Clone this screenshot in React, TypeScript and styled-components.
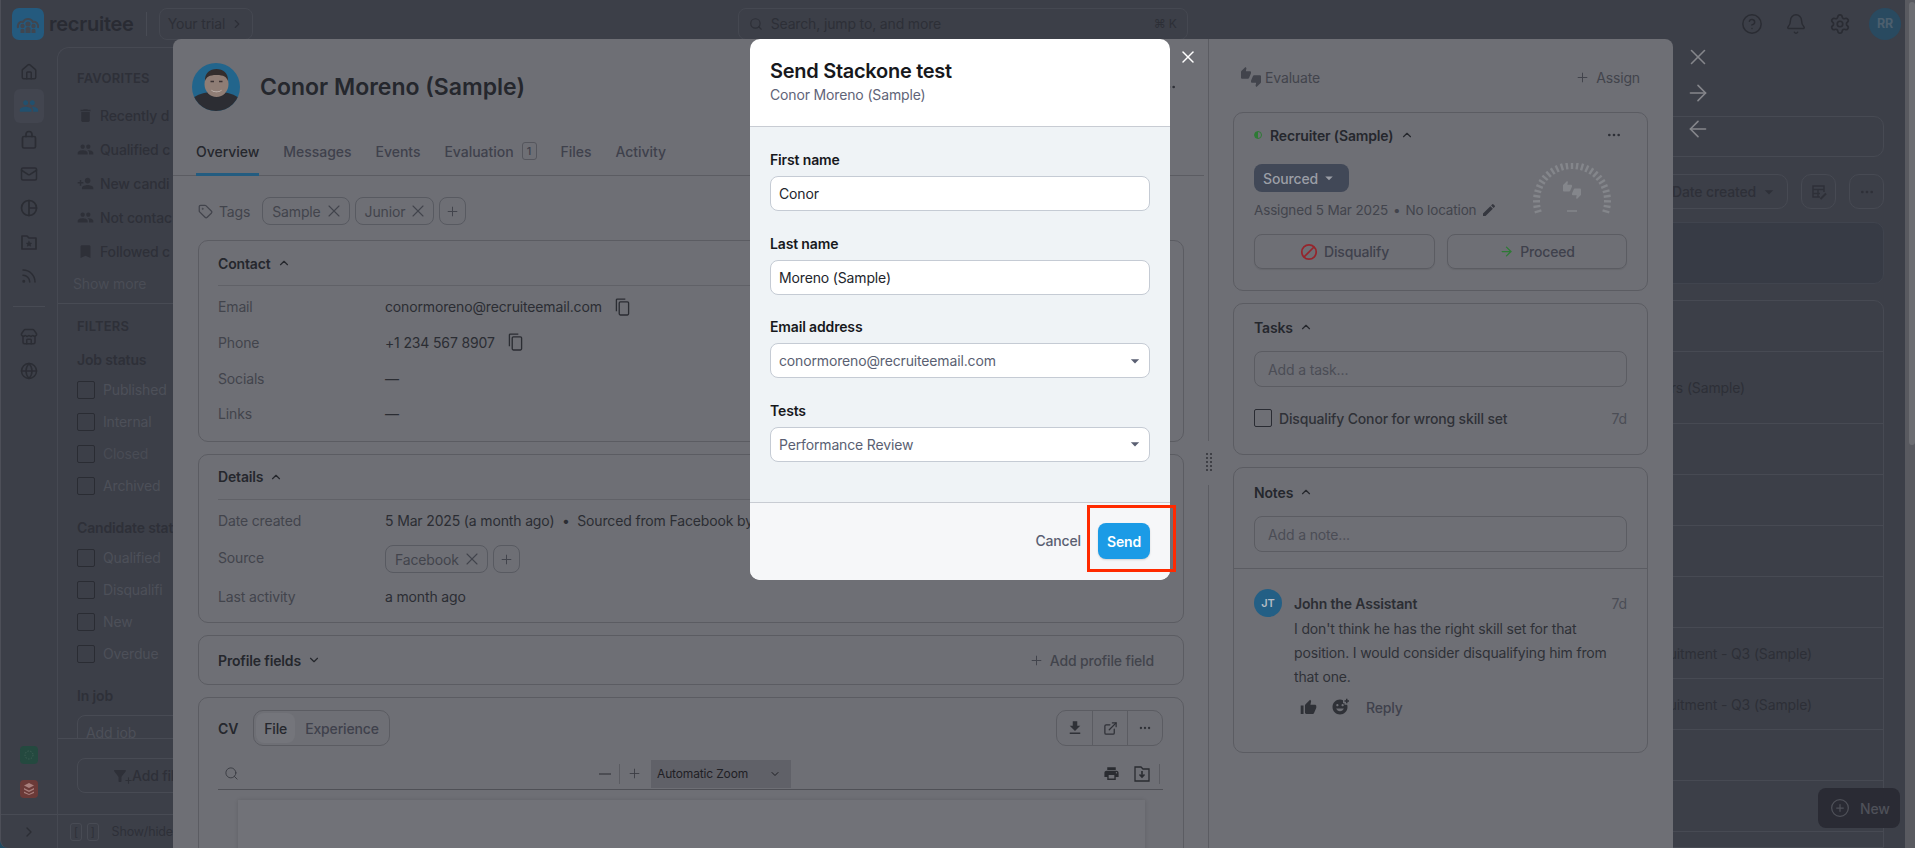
import React from "react";
import styled, { createGlobalStyle } from "styled-components";
import {
  Home, Mail, Rss, Store, Globe, ChevronRight, ChevronUp, ChevronDown,
  Search, CircleHelp, Bell, Settings, X, ArrowRight, ArrowLeft, MoreHorizontal, Tag, Plus,
  ExternalLink, PlusCircle,
} from "lucide-react";
import {
  MdDelete, MdPeople, MdPersonAdd, MdBookmark, MdThumbsUpDown, MdThumbUp, MdAddReaction, MdEdit, MdPrint,
  MdFileDownload, MdFilterAlt, MdArrowDropDown,
} from "react-icons/md";

const GlobalStyle = createGlobalStyle`
  html, body { margin: 0; padding: 0; background: #3c3f48; }
  body { font-family: Inter, "Liberation Sans", sans-serif; font-size: 14px; letter-spacing: -0.15px; }
  * { box-sizing: border-box; }
`;

const Viewport = styled.div`
  position: relative; width: 1915px; height: 848px; overflow: hidden; display: flex; background: #1f4a62;
`;
const Shell = styled.div`
  flex: 1; min-width: 0; display: flex; flex-direction: column; background: #3c3f48; border-left: 1px solid #4d4f58;
  border-bottom-left-radius: 8px;
`;
const ScrollTrack = styled.div`width: 10px; background: #595a60; padding: 2px 0 0 4px;`;
const ScrollThumb = styled.div`width: 6px; height: 443px; border-radius: 3px; background: #6c6d72;`;

/* top bar */
const TopBar = styled.header`
  height: 47px; flex: none; display: flex; align-items: center; padding: 0 4px 0 11px; position: relative;
`;
const Wordmark = styled.span`font-size: 20px; font-weight: 600; color: #292b33; margin-left: 5px; letter-spacing: -0.25px;`;
const BarDivider = styled.div`width: 1px; height: 24px; background: #484b54; margin: 0 12px;`;
const TrialButton = styled.div`
  width: 94px; height: 32px; border: 1px solid #454851; border-radius: 8px; display: flex; align-items: center;
  justify-content: space-between; padding: 0 8px 0 8px; color: #2d2f37; font-size: 14px;
`;
const SearchBox = styled.div`
  width: 450px; height: 32px; margin-left: 485px; border: 1px solid #454851; border-radius: 8px; display: flex;
  align-items: center; padding: 0 10px; color: #2d2f37; font-size: 14px; gap: 8px;
`;
const Kbd = styled.span`margin-left: auto; font-size: 12px; color: #2d2f37;`;
const TopIcons = styled.div`margin-left: auto; display: flex; align-items: center; gap: 22px; color: #2a2c33;`;
const UserBadge = styled.div`
  width: 32px; height: 32px; border-radius: 50%; background: #294a60; color: #4c5f6e; font-weight: 700; font-size: 12.5px;
  display: flex; align-items: center; justify-content: center; margin-left: -4px;
`;

const Body = styled.div`flex: 1; min-height: 0; display: flex;`;

/* rail */
const Rail = styled.nav`width: 56px; flex: none; display: flex; flex-direction: column; align-items: center; padding-top: 8px; color: #2b2d34;`;
const RailItem = styled.div<{ $active?: boolean }>`
  width: 30px; height: 34px; border-radius: 6px; display: flex; align-items: center; justify-content: center;
  background: ${(p) => (p.$active ? "#42454f" : "transparent")}; color: ${(p) => (p.$active ? "#22506e" : "#2b2d34")};
`;
const RailRule = styled.div`width: 32px; height: 1px; background: #484b54; margin: 13px 0 13px;`;
const RailSpacer = styled.div`flex: 1;`;
const StatusTile = styled.div<{ $bg: string }>`
  width: 18px; height: 18px; border-radius: 4px; background: ${(p) => p.$bg}; margin-bottom: 16px;
  display: flex; align-items: center; justify-content: center;
`;
const RailFoot = styled.div`height: 34px; width: 100%; border-top: 1px solid #484b54; display: flex; align-items: center; justify-content: center;`;

/* sidebar */
const Sidebar = styled.aside`
  width: 116px; flex: none; display: flex; flex-direction: column; border-left: 1px solid #464952; border-top: 1px solid #464952;
  border-top-left-radius: 12px; color: #2e3038; overflow: hidden;
`;
const SideScroll = styled.div`height: 690px; overflow: hidden; flex: none;`;
const SidePad = styled.div`padding: 0 0 0 19px; white-space: nowrap;`;
const SideHead = styled.div<{ $top: number }>`
  font-size: 13px; font-weight: 600; line-height: 20px; letter-spacing: 0.2px; margin-top: ${(p) => p.$top}px;
`;
const FavList = styled.div`margin-top: 10px; display: flex; flex-direction: column;`;
const FavItem = styled.div`height: 34px; display: flex; align-items: center; gap: 6px; font-weight: 500; font-size: 14px; white-space: nowrap;`;
const ShowMore = styled.div`color: #4a4d56; line-height: 20px; margin: 5.5px 0 9px -4px; font-size: 14px;`;
const SideRule = styled.div`height: 1px; background: #484b54;`;
const GroupTitle = styled.div<{ $top: number }>`font-weight: 600; line-height: 20px; margin-top: ${(p) => p.$top}px; font-size: 14px; white-space: nowrap;`;
const CheckList = styled.div`margin-top: 4px;`;
const CheckRow = styled.div<{ $faded?: boolean }>`
  height: 32px; display: flex; align-items: center; gap: 8px; color: ${(p) => (p.$faded ? "#494c55" : "#4d5059")}; white-space: nowrap;
`;
const CheckBox = styled.span`width: 18px; height: 18px; border: 1.5px solid #2a2c33; border-radius: 2px; flex: none;`;
const JobInput = styled.div`width: 154px; height: 35px; margin-top: 9px; border: 1px solid #484b54; border-radius: 8px; padding: 8px; color: #4d5059;`;
const SideAction = styled.div`height: 76px; border-top: 1px solid #484b54; padding: 19px 0 0 19px; flex: none;`;
const FilterBtn = styled.div`
  width: 154px; height: 35px; border: 1px solid #484b54; border-radius: 8px; display: flex; align-items: center; padding-left: 33px;
  font-weight: 500; color: #2e3038; white-space: nowrap;
`;
const FunnelPlus = styled(Plus)`margin: 10px -1px 0 -5px; flex: none;`;
const SideFoot = styled.div`height: 34px; border-top: 1px solid #484b54; display: flex; align-items: center; gap: 5px; padding-left: 12px; color: #2e3038; white-space: nowrap;`;
const KeyCap = styled.span`width: 15px; height: 18px; border: 1px solid #484b54; border-radius: 3px; display: flex; align-items: center; justify-content: center; font-size: 11px;`;
const FootText = styled.span`margin-left: 8px; font-size: 12.5px;`;

/* background main */
const Main = styled.main`flex: 1; min-width: 0; padding: 69px 21px 0 0; display: flex; flex-direction: column;`;
const TopBox = styled.div`height: 41px; border: 1px solid #474a53; border-radius: 10px; flex: none;`;
const Controls = styled.div`height: 35px; margin-top: 17px; display: flex; justify-content: flex-end; gap: 13px; flex: none;`;
const SortSelect = styled.div`
  width: 170px; border: 1px solid #474a53; border-radius: 10px; display: flex; align-items: center; justify-content: flex-end; gap: 3px;
  padding-right: 8px; color: #2e3038; font-weight: 500; font-size: 14px;
`;
const SquareBtn = styled.div`width: 35px; border: 1px solid #474a53; border-radius: 10px; display: flex; align-items: center; justify-content: center; color: #2e3038;`;
const InfoBox = styled.div`height: 62px; margin-top: 13px; background: #373b45; border: 1px solid #40444e; border-radius: 10px; flex: none;`;
const Table = styled.div`margin-top: 16px; border: 1px solid #474a53; border-radius: 10px 10px 0 0; flex: 1;`;
const TableRow = styled.div<{ $h: number; $end: number }>`
  height: ${(p) => p.$h}px; border-bottom: 1px solid #474a53; display: flex; align-items: center; justify-content: flex-end;
  padding-right: ${(p) => p.$end}px; color: #2d2f37; font-size: 14px;
`;
const NewFab = styled.div`
  position: absolute; left: 1818px; top: 788px; width: 82px; height: 40px; border-radius: 8px; background: #2a2b34; color: #4f5159;
  display: flex; align-items: center; padding-left: 12px; gap: 10px; font-weight: 500; font-size: 14px;
`;

/* drawer */
const Drawer = styled.section`
  position: absolute; left: 173px; top: 39px; width: 1500px; height: 809px; background: #6e6f75; border-radius: 8px 8px 0 0;
  display: flex; overflow: hidden; color: #25272d;
`;
const DrawerLeft = styled.div`width: 1031px; flex: none; display: flex; flex-direction: column;`;
const Splitter = styled.div`width: 9px; flex: none; display: flex; flex-direction: column; align-items: center;`;
const SplitLine = styled.div<{ $h?: number }>`width: 1px; background: #5b5c62; ${(p) => (p.$h ? `height: ${p.$h}px;` : "flex: 1;")}`;
const SplitDots = styled.div`height: 44px; padding: 12px 0; display: grid; grid-template-columns: 2px 2px; grid-auto-rows: 2px; gap: 2px 2px;`;
const SplitDot = styled.span`background: #3f4046;`;
const DrawerRight = styled.div`flex: 1; padding: 20px 25px 0 20px; display: flex; flex-direction: column;`;

const NameRow = styled.div`height: 48px; margin-top: 24px; padding: 0 27px 0 19px; display: flex; align-items: center; gap: 20px; flex: none;`;
const Name = styled.h1`margin: 0; font-size: 23px; font-weight: 600; color: #25272d; flex: 1; letter-spacing: 0;`;
const TabBar = styled.div`height: 47px; margin-top: 18px; padding-left: 23px; display: flex; gap: 24px; border-bottom: 1px solid #5b5c62; flex: none;`;
const TabItem = styled.div<{ $on?: boolean }>`
  height: 47px; display: flex; align-items: center; gap: 8px; font-weight: 500; font-size: 14px; letter-spacing: -0.03px;
  color: ${(p) => (p.$on ? "#25272d" : "#3f414c")};
  border-bottom: 3px solid ${(p) => (p.$on ? "#235c80" : "transparent")};
`;
const CountBadge = styled.span`width: 15px; height: 18px; border: 1px solid #55565d; border-radius: 3px; display: flex; align-items: center; justify-content: center; font-size: 11px;`;
const TagRow = styled.div`height: 28px; margin-top: 21px; padding-left: 25px; display: flex; align-items: center; gap: 5px; color: #42444c; flex: none;`;
const TagLabel = styled.span`margin: 0 7px 0 1px;`;
const Chip = styled.span`
  height: 28px; border: 1px solid #585a61; border-radius: 8px; padding: 0 8px 0 9px; display: inline-flex; align-items: center; gap: 6px; color: #42444c; font-size: 14px;
`;
const ChipX = styled(X).attrs({ size: 20, strokeWidth: 1.3 })`margin: -3px;`;
const ChipAdd = styled.span`width: 27px; height: 28px; border: 1px solid #585a61; border-radius: 8px; display: inline-flex; align-items: center; justify-content: center; color: #42444c;`;

const Stack = styled.div`margin: 15px 20px 0 25px; display: flex; flex-direction: column; gap: 12px;`;
const Card = styled.div<{ $fill?: boolean }>`
  border: 1px solid #5b5c62; border-radius: 10px; padding: 0 20px 0 19px; flex: none;
  ${(p) => (p.$fill ? "height: 200px;" : "")}
`;
const CardHead = styled.div<{ $h: number; $rule?: boolean }>`
  height: ${(p) => p.$h}px; display: flex; align-items: center; gap: 6px; font-weight: 600; color: #25272d; font-size: 14px;
  ${(p) => (p.$rule ? "border-bottom: 1px solid #606167;" : "")}
`;
const AddField = styled.span`margin-left: auto; margin-right: 9px; font-weight: 500; color: #42444c; display: flex; align-items: center; gap: 6px;`;
const Rows = styled.div<{ $bottom: number }>`padding: 3px 0 ${(p) => p.$bottom}px;`;
const InfoRow = styled.div<{ $h?: number }>`height: ${(p) => p.$h ?? 35.67}px; display: grid; grid-template-columns: 167px 1fr; align-items: center;`;
const InfoKey = styled.span`color: #42444c;`;
const InfoVal = styled.span`color: #2b2d33; display: flex; align-items: center; gap: 13px; white-space: nowrap;`;
const ChipGroup = styled.span`display: flex; gap: 5px; padding-top: 3px;`;

const CvHead = styled.div`height: 36px; margin-top: 12px; display: flex; align-items: center; gap: 15px;`;
const CvTitle = styled.span`font-weight: 600;`;
const Segmented = styled.div`height: 36px; border: 1px solid #5b5c62; border-radius: 10px; display: flex; padding: 2px; align-items: stretch;`;
const SegItem = styled.span<{ $on?: boolean }>`
  display: flex; align-items: center; padding: ${(p) => (p.$on ? "0 8px" : "0 8px 0 10px")}; border-radius: 8px; font-weight: 500; font-size: 14px;
  background: ${(p) => (p.$on ? "#74757b" : "transparent")}; color: ${(p) => (p.$on ? "#25272d" : "#3f414c")};
`;
const BtnGroup = styled.div`margin-left: auto; height: 36px; border: 1px solid #5b5c62; border-radius: 10px; display: flex; color: #2f3137;`;
const BtnCell = styled.span`width: 35px; display: flex; align-items: center; justify-content: center; border-left: 1px solid #5b5c62; &:first-child { border-left: 0; }`;
const PdfBar = styled.div`height: 30px; margin-top: 14px; border-bottom: 1px solid #4f5056; display: flex; align-items: center; padding: 0 3px 2px 6px; color: #3a3c42;`;
const PdfZoom = styled.div`margin-left: 359px; display: flex; align-items: center; gap: 7px; height: 28px;`;
const PdfSep = styled.span`width: 1px; height: 20px; background: #5b5c62;`;
const PdfSelect = styled.div`
  width: 140px; height: 28px; margin-left: 2px; background: #606168; display: flex; align-items: center; justify-content: space-between; padding: 0 10px 0 6px;
  font-size: 12px; color: #1f2025;
`;
const PdfTools = styled.div`margin-left: auto; display: flex; align-items: center; gap: 13px; color: #2a2c31;`;
const PdfToolSep = styled(PdfSep)`margin-left: -5px;`;
const PdfPage = styled.div`height: 80px; margin: 10px 18px 0 20px; background: #717278; box-shadow: 0 0 4px rgba(0,0,0,.12);`;

/* right column */
const EvalBar = styled.div`height: 36px; display: flex; align-items: center; padding: 0 8px; color: #42444c; font-size: 14px; flex: none;`;
const EvalItem = styled.span`display: flex; align-items: center; gap: 4px;`;
const AssignItem = styled(EvalItem)`margin-left: auto; gap: 6px;`;
const SideCard = styled.div<{ $top: number }>`
  margin-top: ${(p) => p.$top}px; border: 1px solid #5b5c62; border-radius: 10px; flex: none;
`;
const SideCardPad = styled.div`padding: 0 20px;`;
const StageHead = styled.div`height: 22px; margin-top: 11px; display: flex; align-items: center; font-weight: 600; color: #25272d; gap: 7px;`;
const HalfDot = styled.span`
  width: 8px; height: 8px; border-radius: 50%; border: 1.5px solid #2e7a35; flex: none; margin-right: 1px;
  background: linear-gradient(90deg, #2e7a35 50%, transparent 50%);
`;
const DotsRight = styled.span`margin-left: auto; margin-right: 5px; display: flex; color: #2e3037;`;
const StageBody = styled.div`margin-top: 18px; display: flex; justify-content: space-between; height: 56px;`;
const StageInfo = styled.div`display: flex; flex-direction: column; align-items: flex-start;`;
const StageBtn = styled.div`
  height: 28px; width: 95px; border-radius: 8px; background: #414857; color: #9b9ea6; font-weight: 500; display: flex; align-items: center;
  padding-left: 9px; gap: 2px;
`;
const StageMeta = styled.div`margin-top: 8px; height: 20px; display: flex; align-items: center; gap: 5px; color: #42444c; white-space: nowrap; font-size: 13.5px;`;
const GaugeWrap = styled.div`width: 84px; height: 56px; margin: -1px 13px 0 0; color: #84868b;`;
const ActionRow = styled.div`display: grid; grid-template-columns: 181px 180px; justify-content: space-between; margin-top: 14px; padding-bottom: 21px;`;
const ActionBtn = styled.div`
  height: 35px; border: 1px solid #5b5c62; border-radius: 8px; display: flex; align-items: center; justify-content: center; gap: 6px;
  font-weight: 500; color: #3f414c; box-shadow: 0 1px 1px rgba(0,0,0,.08);
`;
const SideTitle = styled.div<{ $top: number }>`height: 20px; margin-top: ${(p) => p.$top}px; display: flex; align-items: center; gap: 6px; font-weight: 600; color: #25272d;`;
const Field = styled.div<{ $top: number }>`
  height: 36px; margin-top: ${(p) => p.$top}px; border: 1px solid #5b5c62; border-radius: 8px; display: flex; align-items: center; padding: 0 13px; color: #4b4d55;
`;
const TaskRow = styled.div`height: 22px; margin: 20px 0 25px; display: flex; align-items: center; gap: 7px; color: #2f3137; font-weight: 500;`;
const TaskAge = styled.span`margin-left: auto; color: #4b4d55; font-weight: 400;`;
const TaskBox = styled.span`width: 18px; height: 18px; border: 1.5px solid #2a2c33; border-radius: 2px;`;
const NotesRule = styled.div`height: 1px; background: #5b5c62; margin-top: 16px;`;
const NoteWrap = styled.div`padding: 20px 20px 33px; display: flex; gap: 12px;`;
const NoteAvatar = styled.div`
  width: 28px; height: 28px; border-radius: 50%; background: #235f85; color: #b4bcc4; font-size: 11px; font-weight: 600; flex: none;
  display: flex; align-items: center; justify-content: center;
`;
const NoteMain = styled.div`flex: 1;`;
const NoteHead = styled.div`height: 28px; display: flex; align-items: center; justify-content: space-between; font-weight: 600; color: #2b2d33;`;
const NoteAge = styled.span`color: #4b4d55; font-weight: 400;`;
const NoteText = styled.p`margin: 0; line-height: 24px; color: #2f3137; font-weight: 400;`;
const NoteActions = styled.div`height: 24px; margin-top: 6px; padding-left: 6px; display: flex; align-items: center; gap: 14px; color: #2f3137;`;
const ReplyLink = styled.span`color: #3f414c; font-weight: 500; margin-left: 3px;`;

const DrawerNav = styled.div`
  position: absolute; left: 1685px; top: 44px; display: flex; flex-direction: column; gap: 10px; color: #85868b;
`;

/* modal */
const Modal = styled.div`
  position: absolute; left: 750px; top: 39px; width: 420px; height: 541px; border-radius: 10px; overflow: hidden; background: #fff;
  display: flex; flex-direction: column;
`;
const ModalHead = styled.div`height: 88px; padding: 20px 20px 0; border-bottom: 1px solid #c8ccd3; flex: none;`;
const ModalTitle = styled.h2`margin: 0; font-size: 20px; line-height: 24px; font-weight: 600; color: #17181c; letter-spacing: -0.28px;`;
const ModalSub = styled.div`margin-top: 2px; line-height: 20px; font-size: 14px; color: #5f6478;`;
const ModalBody = styled.div`flex: 1; background: #eff3f6; padding: 23px 20px 0;`;
const FieldBlock = styled.div`margin-bottom: 22.67px;`;
const FieldLabel = styled.label`display: block; font-size: 14px; line-height: 20px; font-weight: 600; color: #17181c; margin-bottom: 6px;`;
const TextBox = styled.div`
  height: 35px; background: #fff; border: 1px solid #c5cbd4; border-radius: 8px; padding: 0 8px; display: flex; align-items: center; font-size: 14px; color: #23252c;
`;
const SelectBox = styled(TextBox)`justify-content: space-between; color: #5a5f72; font-weight: 400; padding-right: 4px;`;
const ModalFoot = styled.div`
  height: 78px; flex: none; background: #f6f7f9; border-top: 1px solid #c8ccd3; display: flex; justify-content: flex-end; align-items: flex-start; gap: 17px; padding: 20px 20px 0;
`;
const CancelBtn = styled.span`line-height: 36px; font-weight: 500; color: #5a5f72; font-size: 14px;`;
const SendBtn = styled.span`
  height: 36px; width: 52px; border-radius: 8px; background: #1b9be6; color: #fff; font-weight: 600; font-size: 14px; display: flex; align-items: center; justify-content: center;
  box-shadow: 0 1px 2px rgba(0,0,0,.15);
`;
const ModalClose = styled.div`position: absolute; left: 1178px; top: 47px; color: #fff; display: flex;`;
const RedFrame = styled.div`position: absolute; left: 1087px; top: 505px; width: 89px; height: 67px; border: 3px solid #ff2a00;`;

const Logo = () => (
  <svg width="32" height="32" viewBox="0 0 32 32">
    <rect width="32" height="32" rx="7" fill="#245a7e" />
    <path d="M6 20c-1-5 3-7 5-6 2-4 8-4 10 0 3-1 6 2 5 6" fill="none" stroke="#3f4650" strokeWidth="2" />
    <circle cx="10.5" cy="18" r="2.2" fill="#3f4650" /><circle cx="16" cy="16" r="2.6" fill="#3f4650" /><circle cx="21.5" cy="18" r="2.2" fill="#3f4650" />
    <path d="M8.5 25v-3c0-1.5 4-1.5 4 0v3zM13.5 25v-4.5c0-2 5-2 5 0V25zM19.5 25v-3c0-1.5 4-1.5 4 0v3z" fill="#3f4650" />
  </svg>
);

const Portrait = () => (
  <svg width="48" height="48" viewBox="0 0 48 48" style={{ flex: "none" }}>
    <defs><clipPath id="pc"><circle cx="24" cy="24" r="24" /></clipPath></defs>
    <g clipPath="url(#pc)">
      <rect width="48" height="48" fill="#22658c" />
      <path d="M0 48V36c5-5 13-6 17-7h14c4 1 12 2 17 7v12z" fill="#2c2d33" />
      <ellipse cx="24.5" cy="21" rx="12" ry="13" fill="#8f7d75" />
      <path d="M13 18c-.5-8 5-12 11.500-12s12 4 11.500 12c-1.500-4-4-6-11.500-6s-10 2-11.500 6z" fill="#332d2d" />
      <path d="M18.500 18.500h3.500M27 18.500h3.500" stroke="#3c3334" strokeWidth="1.300" />
      <path d="M19 26.500c3 2.800 8 2.800 11 0-1 3.500-10 3.500-11 0z" fill="#cfc6c1" />
    </g>
  </svg>
);

const Gauge = () => {
  const ticks = Array.from({ length: 27 }, (_, i) => -197 + (i * 214) / 26);
  return (
    <svg width="84" height="56" viewBox="0 0 84 56">
      {ticks.map((a) => {
        const r = (a * Math.PI) / 180;
        return (
          <line key={a} x1={42 + 32 * Math.cos(r)} y1={38 + 32 * Math.sin(r)} x2={42 + 39 * Math.cos(r)} y2={38 + 39 * Math.sin(r)}
            stroke="currentColor" strokeWidth="2.4" />
        );
      })}
      <line x1="37" y1="48" x2="47" y2="48" stroke="currentColor" strokeWidth="1.3" />
      <g transform="translate(33 18)"><MdThumbsUpDown size={18} /></g>
    </svg>
  );
};

const iconProps = { width: 20, height: 20, viewBox: "0 0 20 20", fill: "none", stroke: "currentColor", strokeWidth: 1.7, strokeLinecap: "round" as const, strokeLinejoin: "round" as const };
const BagIcon = () => (<svg {...iconProps}><rect x="3.5" y="6.5" width="13" height="11.5" rx="1.5" /><path d="M7 6.5V4.5a3 3 0 0 1 6 0v2" /></svg>);
const ChartIcon = () => (<svg {...iconProps}><circle cx="10" cy="10" r="7.5" /><path d="M10 2.5v15M10 10h7.5" /></svg>);
const FolderStar = () => (<svg {...iconProps}><path d="M3 4h5l2 2h7v11H3z" /><path d="M10 9.2l.9 1.7 1.8.3-1.3 1.3.3 1.8-1.7-.9-1.7.9.3-1.8-1.3-1.3 1.8-.3z" fill="currentColor" strokeWidth=".5" /></svg>);
const CopyIcon = () => (
  <svg width="15" height="18" viewBox="0 0 16 19" fill="none" stroke="currentColor" strokeWidth="1.4" style={{ flex: "none" }}>
    <path d="M1.500 14V2a1 1 0 0 1 1-1H11" /><rect x="4.500" y="4" width="10" height="14" rx="1.200" />
  </svg>
);
const SlashCircle = () => (
  <svg width="18" height="18" viewBox="0 0 18 18" fill="none" stroke="#96252c" strokeWidth="1.7">
    <circle cx="9" cy="9" r="7.2" /><path d="M14 4L4 14" />
  </svg>
);

const favs = [
  { Icon: MdDelete, label: "Recently d" }, { Icon: MdPeople, label: "Qualified c" },
  { Icon: MdPersonAdd, label: "New candi" }, { Icon: MdPeople, label: "Not contac" },
  { Icon: MdBookmark, label: "Followed c" },
];
const tabs = ["Overview", "Messages", "Events", "Evaluation", "Files", "Activity"];
const bgRows: { h: number; end: number; text?: string }[] = [
  { h: 51, end: 0 }, { h: 72, end: 138, text: "rs (Sample)" }, { h: 51, end: 0 }, { h: 51, end: 0 }, { h: 51, end: 0 },
  { h: 51, end: 0 }, { h: 51, end: 71, text: "uitment - Q3 (Sample)" },
  { h: 51, end: 71, text: "uitment - Q3 (Sample)" }, { h: 51, end: 0 }, { h: 51, end: 0 },
];

const Chevron = ({ up }: { up?: boolean }) => (up ? <ChevronUp size={14} strokeWidth={2} /> : <ChevronDown size={14} strokeWidth={2} />);

export default function App() {
  return (
    <Viewport>
      <GlobalStyle />
      <Shell>
        <TopBar>
          <Logo />
          <Wordmark>recruitee</Wordmark>
          <BarDivider />
          <TrialButton>Your trial <ChevronRight size={14} /></TrialButton>
          <SearchBox><Search size={14} />Search, jump to, and more<Kbd>⌘ K</Kbd></SearchBox>
          <TopIcons>
            <CircleHelp size={22} strokeWidth={1.6} />
            <Bell size={22} strokeWidth={1.6} />
            <Settings size={22} strokeWidth={1.8} />
            <UserBadge>RR</UserBadge>
          </TopIcons>
        </TopBar>
        <Body>
          <Rail>
            <RailItem><Home size={18} /></RailItem>
            <RailItem $active><MdPeople size={20} /></RailItem>
            <RailItem><BagIcon /></RailItem>
            <RailItem><Mail size={18} /></RailItem>
            <RailItem><ChartIcon /></RailItem>
            <RailItem><FolderStar /></RailItem>
            <RailItem><Rss size={18} /></RailItem>
            <RailRule />
            <RailItem><Store size={18} /></RailItem>
            <RailItem><Globe size={18} /></RailItem>
            <RailSpacer />
            <StatusTile $bg="#24493f"><svg width="10" height="10" viewBox="0 0 10 10"><circle cx="5" cy="5" r="4" fill="none" stroke="#3f5f55" strokeDasharray="1.4 1.4" /></svg></StatusTile>
            <StatusTile $bg="#6b3a38"><svg width="12" height="12" viewBox="0 0 12 12" fill="#a87f7c"><path d="M6 0l5 2.5L6 5 1 2.5zM1 5l5 2.5L11 5v1.5L6 9 1 6.5zM1 8.5L6 11l5-2.5V10l-5 2-5-2z" /></svg></StatusTile>
            <RailFoot><ChevronRight size={16} /></RailFoot>
          </Rail>
          <Sidebar>
            <SideScroll>
              <SidePad>
                <SideHead $top={20}>FAVORITES</SideHead>
                <FavList>
                  {favs.map(({ Icon, label }) => (
                    <FavItem key={label}><Icon size={17} style={{ flex: "none" }} />{label}</FavItem>
                  ))}
                </FavList>
                <ShowMore>Show more</ShowMore>
              </SidePad>
              <SideRule />
              <SidePad>
                <SideHead $top={12}>FILTERS</SideHead>
                <GroupTitle $top={14}>Job status</GroupTitle>
                <CheckList>
                  <CheckRow><CheckBox />Published</CheckRow>
                  <CheckRow><CheckBox />Internal</CheckRow>
                  <CheckRow $faded><CheckBox />Closed</CheckRow>
                  <CheckRow><CheckBox />Archived</CheckRow>
                </CheckList>
                <GroupTitle $top={16}>Candidate stat</GroupTitle>
                <CheckList>
                  <CheckRow><CheckBox />Qualified</CheckRow>
                  <CheckRow><CheckBox />Disqualifi</CheckRow>
                  <CheckRow><CheckBox />New</CheckRow>
                  <CheckRow><CheckBox />Overdue</CheckRow>
                </CheckList>
                <GroupTitle $top={16}>In job</GroupTitle>
                <JobInput>Add job</JobInput>
              </SidePad>
            </SideScroll>
            <SideAction>
              <FilterBtn><MdFilterAlt size={18} style={{ flex: "none" }} /><FunnelPlus size={9} strokeWidth={3} />Add fil</FilterBtn>
            </SideAction>
            <SideFoot><KeyCap>[</KeyCap><KeyCap>]</KeyCap><FootText>Show/hide</FootText></SideFoot>
          </Sidebar>
          <Main>
            <TopBox />
            <Controls>
              <SortSelect>Date created<MdArrowDropDown size={20} /></SortSelect>
              <SquareBtn>
                <svg width="16" height="16" viewBox="0 0 16 16" fill="none" stroke="currentColor" strokeWidth="1.4">
                  <path d="M9 13H2V2h11v6M2 5.5h11M2 9.5h7M7 5.5V13" /><path d="M9.5 15l5.5-5.5" strokeWidth="2" />
                </svg>
              </SquareBtn>
              <SquareBtn><MoreHorizontal size={16} /></SquareBtn>
            </Controls>
            <InfoBox />
            <Table>
              {bgRows.map((row, i) => (
                <TableRow key={i} $h={row.h} $end={row.end}>{row.text}</TableRow>
              ))}
            </Table>
          </Main>
        </Body>
      </Shell>
      <ScrollTrack><ScrollThumb /></ScrollTrack>
      <NewFab><PlusCircle size={20} strokeWidth={1.5} />New</NewFab>

      <DrawerNav>
        <X size={26} strokeWidth={1.5} />
        <ArrowRight size={26} strokeWidth={1.5} />
        <ArrowLeft size={26} strokeWidth={1.5} />
      </DrawerNav>

      <Drawer>
        <DrawerLeft>
          <NameRow>
            <Portrait />
            <Name>Conor Moreno (Sample)</Name>
            <MoreHorizontal size={16} color="#2e3037" />
          </NameRow>
          <TabBar>
            {tabs.map((t) => (
              <TabItem key={t} $on={t === "Overview"}>
                {t}{t === "Evaluation" && <CountBadge>1</CountBadge>}
              </TabItem>
            ))}
          </TabBar>
          <TagRow>
            <Tag size={15} />
            <TagLabel>Tags</TagLabel>
            <Chip>Sample <ChipX /></Chip>
            <Chip>Junior <ChipX /></Chip>
            <ChipAdd><Plus size={15} strokeWidth={1.6} /></ChipAdd>
          </TagRow>
          <Stack>
            <Card>
              <CardHead $h={45} $rule>Contact <Chevron up /></CardHead>
              <Rows $bottom={9}>
                <InfoRow><InfoKey>Email</InfoKey><InfoVal>conormoreno@recruiteemail.com <CopyIcon /></InfoVal></InfoRow>
                <InfoRow><InfoKey>Phone</InfoKey><InfoVal>+1 234 567 8907 <CopyIcon /></InfoVal></InfoRow>
                <InfoRow><InfoKey>Socials</InfoKey><InfoVal>—</InfoVal></InfoRow>
                <InfoRow><InfoKey>Links</InfoKey><InfoVal>—</InfoVal></InfoRow>
              </Rows>
            </Card>
            <Card>
              <CardHead $h={45} $rule>Details <Chevron up /></CardHead>
              <Rows $bottom={7}>
                <InfoRow><InfoKey>Date created</InfoKey><InfoVal>5 Mar 2025 (a month ago)&nbsp;&nbsp;•&nbsp;&nbsp;Sourced from Facebook by</InfoVal></InfoRow>
                <InfoRow $h={38.5}><InfoKey>Source</InfoKey><ChipGroup><Chip>Facebook <ChipX /></Chip><ChipAdd><Plus size={15} strokeWidth={1.6} /></ChipAdd></ChipGroup></InfoRow>
                <InfoRow $h={38.5}><InfoKey>Last activity</InfoKey><InfoVal>a month ago</InfoVal></InfoRow>
              </Rows>
            </Card>
            <Card>
              <CardHead $h={48}>Profile fields <Chevron /><AddField><Plus size={15} strokeWidth={1.6} />Add profile field</AddField></CardHead>
            </Card>
            <Card $fill>
              <CvHead>
                <CvTitle>CV</CvTitle>
                <Segmented><SegItem $on>File</SegItem><SegItem>Experience</SegItem></Segmented>
                <BtnGroup>
                  <BtnCell><MdFileDownload size={18} /></BtnCell>
                  <BtnCell><ExternalLink size={15} /></BtnCell>
                  <BtnCell><MoreHorizontal size={14} /></BtnCell>
                </BtnGroup>
              </CvHead>
              <PdfBar>
                <Search size={15} strokeWidth={1.5} />
                <PdfZoom>
                  <svg width="14" height="14" viewBox="0 0 14 14"><path d="M1 7h12" stroke="currentColor" strokeWidth="1.3" /></svg>
                  <PdfSep />
                  <Plus size={15} strokeWidth={1.4} />
                  <PdfSelect>Automatic Zoom<ChevronDown size={12} /></PdfSelect>
                </PdfZoom>
                <PdfTools>
                  <MdPrint size={17} />
                  <svg width="18" height="18" viewBox="0 0 18 18" fill="none" stroke="currentColor" strokeWidth="1.3"><path d="M2 2h6l2 2h6v12H2z" /><path d="M9 6v6M6.5 9.5L9 12l2.5-2.5" strokeWidth="1.6" /></svg>
                  <PdfToolSep />
                </PdfTools>
              </PdfBar>
              <PdfPage />
            </Card>
          </Stack>
        </DrawerLeft>
        <Splitter>
          <SplitLine $h={402} />
          <SplitDots>{Array.from({ length: 10 }, (_, i) => <SplitDot key={i} />)}</SplitDots>
          <SplitLine />
        </Splitter>
        <DrawerRight>
          <EvalBar>
            <EvalItem><MdThumbsUpDown size={20} />Evaluate</EvalItem>
            <AssignItem><Plus size={15} strokeWidth={1.6} />Assign</AssignItem>
          </EvalBar>
          <SideCard $top={17}>
            <SideCardPad>
              <StageHead><HalfDot />Recruiter (Sample) <Chevron up /><DotsRight><MoreHorizontal size={16} /></DotsRight></StageHead>
              <StageBody>
                <StageInfo>
                  <StageBtn>Sourced <MdArrowDropDown size={18} /></StageBtn>
                  <StageMeta>Assigned 5 Mar 2025 <span>•</span> No location <MdEdit size={16} color="#35373f" /></StageMeta>
                </StageInfo>
                <GaugeWrap><Gauge /></GaugeWrap>
              </StageBody>
              <ActionRow>
                <ActionBtn><SlashCircle />Disqualify</ActionBtn>
                <ActionBtn><ArrowRight size={15} color="#2e7a35" />Proceed</ActionBtn>
              </ActionRow>
            </SideCardPad>
          </SideCard>
          <SideCard $top={12}>
            <SideCardPad>
              <SideTitle $top={13}>Tasks <Chevron up /></SideTitle>
              <Field $top={14}>Add a task...</Field>
              <TaskRow><TaskBox />Disqualify Conor for wrong skill set<TaskAge>7d</TaskAge></TaskRow>
            </SideCardPad>
          </SideCard>
          <SideCard $top={12}>
            <SideCardPad>
              <SideTitle $top={14}>Notes <Chevron up /></SideTitle>
              <Field $top={14}>Add a note...</Field>
            </SideCardPad>
            <NotesRule />
            <NoteWrap>
              <NoteAvatar>JT</NoteAvatar>
              <NoteMain>
                <NoteHead>John the Assistant<NoteAge>7d</NoteAge></NoteHead>
                <NoteText>I don't think he has the right skill set for that position. I would consider disqualifying him from that one.</NoteText>
                <NoteActions>
                  <MdThumbUp size={17} />
                  <MdAddReaction size={18} />
                  <ReplyLink>Reply</ReplyLink>
                </NoteActions>
              </NoteMain>
            </NoteWrap>
          </SideCard>
        </DrawerRight>
      </Drawer>

      <Modal>
        <ModalHead>
          <ModalTitle>Send Stackone test</ModalTitle>
          <ModalSub>Conor Moreno (Sample)</ModalSub>
        </ModalHead>
        <ModalBody>
          <FieldBlock><FieldLabel>First name</FieldLabel><TextBox>Conor</TextBox></FieldBlock>
          <FieldBlock><FieldLabel>Last name</FieldLabel><TextBox>Moreno (Sample)</TextBox></FieldBlock>
          <FieldBlock><FieldLabel>Email address</FieldLabel><SelectBox>conormoreno@recruiteemail.com<MdArrowDropDown size={20} /></SelectBox></FieldBlock>
          <FieldBlock><FieldLabel>Tests</FieldLabel><SelectBox>Performance Review<MdArrowDropDown size={20} /></SelectBox></FieldBlock>
        </ModalBody>
        <ModalFoot>
          <CancelBtn>Cancel</CancelBtn>
          <SendBtn>Send</SendBtn>
        </ModalFoot>
      </Modal>
      <ModalClose><X size={20} strokeWidth={1.8} /></ModalClose>
      <RedFrame />
    </Viewport>
  );
}
